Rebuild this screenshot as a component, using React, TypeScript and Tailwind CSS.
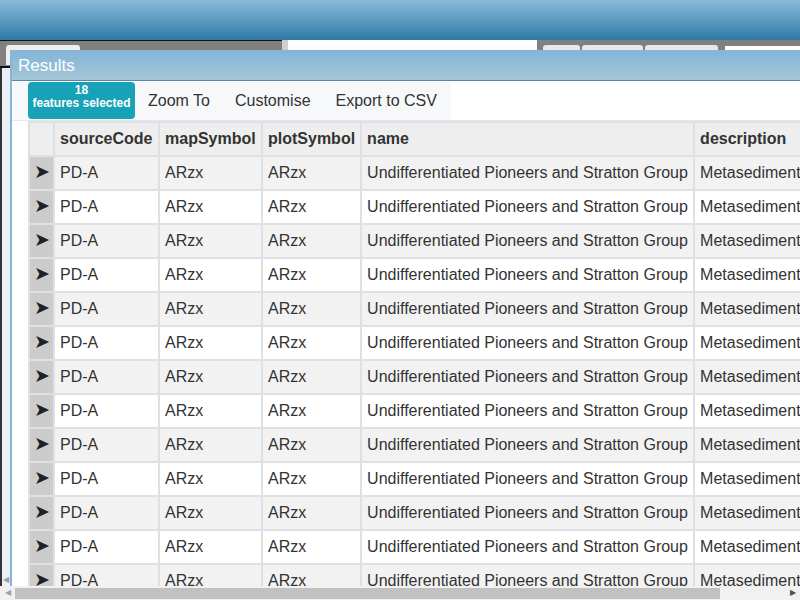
const columns = [
  { key: "sourceCode", label: "sourceCode", w: "w-[103px] min-w-[103px]" },
  { key: "mapSymbol", label: "mapSymbol", w: "w-[101px] min-w-[101px]" },
  { key: "plotSymbol", label: "plotSymbol", w: "w-[97px] min-w-[97px]" },
  { key: "name", label: "name", w: "w-[331px] min-w-[331px]" },
  { key: "description", label: "description", w: "w-[400px] min-w-[400px]" },
]

const row = {
  sourceCode: "PD-A",
  mapSymbol: "ARzx",
  plotSymbol: "ARzx",
  name: "Undifferentiated Pioneers and Stratton Group",
  description: "Metasediments and metavolcanics, undivided",
} as Record<string, string>

const rows = Array.from({ length: 18 }, () => row)

export default function App() {
  return (
    <div className="relative w-[800px] h-[600px] overflow-hidden bg-white font-['Liberation_Sans',Arial,sans-serif] text-[#333]">
      {/* app header */}
      <div className="h-[40px] bg-gradient-to-b from-[#88bcdc] to-[#2e79a5]"></div>

      {/* app toolbar behind the window */}
      <div className="flex h-[28px]">
        <div className="w-[282px] bg-[#808080] border-t border-b-2 border-[#111] flex items-start pl-[6px] pt-[4px]">
          <div className="w-[74px] h-[20px] bg-[#eeeeee] rounded-t-[3px]"></div>
        </div>
        <div className="w-[6px] bg-[#cfcfcf]"></div>
        <div className="w-[249px] bg-gradient-to-b from-white to-[#eef3fa]"></div>
        <div className="w-[188px] bg-[#808080] flex gap-[2px] pl-[6px] pt-[5px]">
          <div className="w-[37px] h-[20px] bg-[#e6e8ea] rounded-t-[3px]"></div>
          <div className="w-[61px] h-[20px] bg-[#e6e8ea] rounded-t-[3px]"></div>
          <div className="w-[73px] h-[20px] bg-[#e6e8ea] rounded-t-[3px]"></div>
        </div>
        <div className="flex-1 bg-[#808080] pt-[6px]">
          <div className="h-full bg-white"></div>
        </div>
      </div>
      <div className="flex h-[532px]">
        <div className="w-[2px] bg-[#333]"></div>
        <div className="w-[8px] bg-[#eaf0f7] flex flex-col justify-end items-center pb-[16px]">
          <span className="text-[8px] text-[#a0a0a0] leading-none">◀</span>
        </div>
      </div>

      {/* Results window */}
      <div className="absolute left-[10px] top-[50px] w-[800px] h-[536px] bg-white border-l-2 border-t border-[#8db3d3] flex flex-col">
        <div className="h-[30px] shrink-0 bg-gradient-to-b from-[#82b6d8] to-[#a4c5d6] border-b border-[#5b86ad] flex items-center pl-[6px]">
          <span className="text-white text-[17px]">Results</span>
        </div>
        <div className="flex-1 overflow-hidden pt-[1px]">
          <div className="flex h-[38px] w-[438px] ml-[1px] pl-[15px] bg-[#f7f8fa] rounded-r-[4px]">
            <button className="w-[107px] h-[37px] bg-[#17a2b8] rounded-[4px] text-white font-bold text-[12px] leading-[13px] flex flex-col items-center justify-start pt-[2px]">
              <span>18</span>
              <span>features selected</span>
            </button>
            <button className="px-[13px] text-[16px] text-[#333]">Zoom To</button>
            <button className="px-[12px] text-[16px] text-[#333]">Customise</button>
            <button className="px-[13px] text-[16px] text-[#333]">Export to CSV</button>
          </div>
          <div className="h-[1px] bg-[#e5e7ea]"></div>
          <table className="ml-[16px] border-separate border-spacing-[2px] bg-[#dde1e5] text-[16px] whitespace-nowrap">
            <thead>
              <tr className="h-[32px]">
                <th className="w-[23px] min-w-[23px] bg-[#eeeeee]"></th>
                {columns.map((c) => (
                  <th key={c.key} className={`${c.w} bg-[#eeeeee] text-left font-bold px-[5px]`}>
                    {c.label}
                  </th>
                ))}
              </tr>
            </thead>
            <tbody>
              {rows.map((r, i) => (
                <tr key={i} className="h-[32px]">
                  <td className="w-[23px] min-w-[23px] bg-[#cccccc] text-center text-[#222] text-[19px] leading-none pb-[3px]">➤</td>
                  {columns.map((c) => (
                    <td
                      key={c.key}
                      className={`${i % 2 === 0 ? "bg-[#f2f2f2]" : "bg-white"} px-[5px]`}
                    >
                      {r[c.key]}
                    </td>
                  ))}
                </tr>
              ))}
            </tbody>
          </table>
        </div>
      </div>

      {/* page horizontal scrollbar */}
      <div className="absolute left-0 bottom-0 w-[800px] h-[14px] bg-[#f1f1f1] flex items-center">
        <span className="w-[15px] text-center text-[8px] text-[#a3a3a3] leading-none">◀</span>
        <div className="w-[705px] h-[11px] bg-[#c1c1c1]"></div>
        <div className="flex-1"></div>
        <span className="w-[15px] text-center text-[8px] text-[#505050] leading-none">▶</span>
      </div>
    </div>
  )
}
